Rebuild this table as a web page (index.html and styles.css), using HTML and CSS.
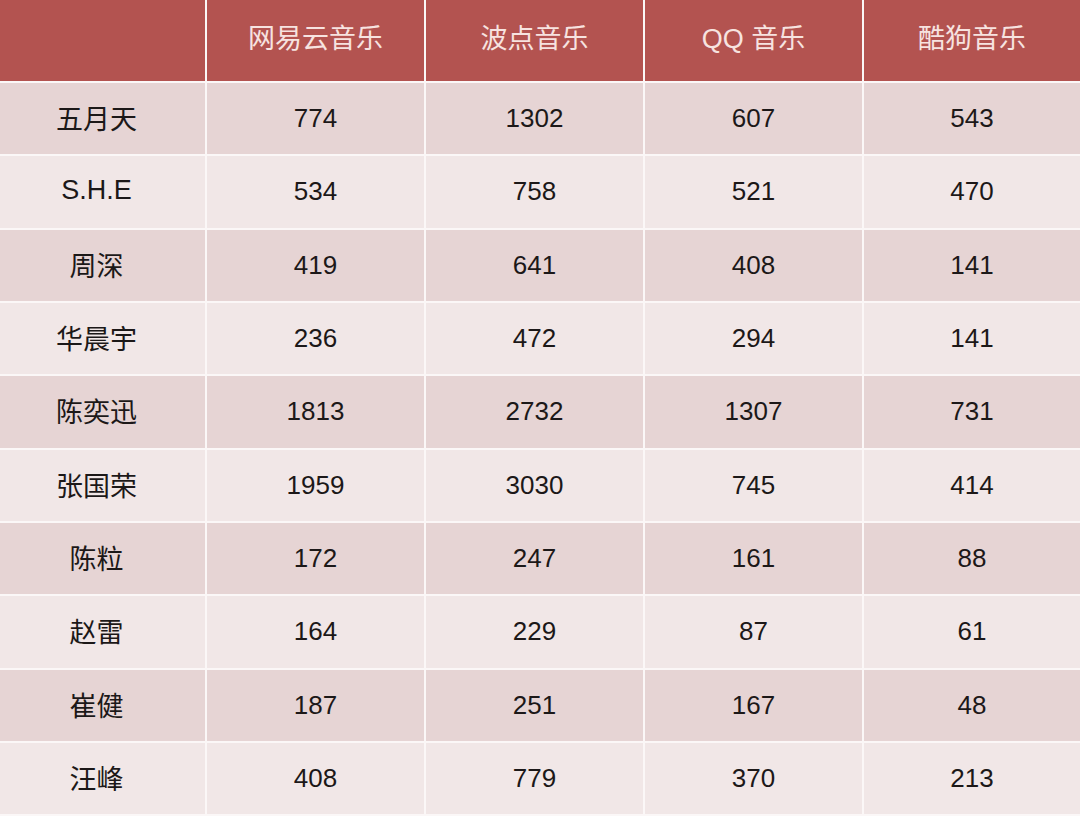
FILE: index.html
```html
<!DOCTYPE html>
<html lang="zh">
<head>
<meta charset="utf-8">
<title>音乐平台数据</title>
<link rel="stylesheet" href="styles.css">
</head>
<body>
<div class="table">
  <div class="cell head name"></div>
  <div class="cell head">网易云音乐</div>
  <div class="cell head">波点音乐</div>
  <div class="cell head">QQ 音乐</div>
  <div class="cell head">酷狗音乐</div>

  <div class="cell dark name">五月天</div><div class="cell dark">774</div><div class="cell dark">1302</div><div class="cell dark">607</div><div class="cell dark">543</div>
  <div class="cell light name">S.H.E</div><div class="cell light">534</div><div class="cell light">758</div><div class="cell light">521</div><div class="cell light">470</div>
  <div class="cell dark name">周深</div><div class="cell dark">419</div><div class="cell dark">641</div><div class="cell dark">408</div><div class="cell dark">141</div>
  <div class="cell light name">华晨宇</div><div class="cell light">236</div><div class="cell light">472</div><div class="cell light">294</div><div class="cell light">141</div>
  <div class="cell dark name">陈奕迅</div><div class="cell dark">1813</div><div class="cell dark">2732</div><div class="cell dark">1307</div><div class="cell dark">731</div>
  <div class="cell light name">张国荣</div><div class="cell light">1959</div><div class="cell light">3030</div><div class="cell light">745</div><div class="cell light">414</div>
  <div class="cell dark name">陈粒</div><div class="cell dark">172</div><div class="cell dark">247</div><div class="cell dark">161</div><div class="cell dark">88</div>
  <div class="cell light name">赵雷</div><div class="cell light">164</div><div class="cell light">229</div><div class="cell light">87</div><div class="cell light">61</div>
  <div class="cell dark name">崔健</div><div class="cell dark">187</div><div class="cell dark">251</div><div class="cell dark">167</div><div class="cell dark">48</div>
  <div class="cell light name">汪峰</div><div class="cell light">408</div><div class="cell light">779</div><div class="cell light">370</div><div class="cell light">213</div>
</div>
</body>
</html>
```
FILE: styles.css
```css
html, body {
  margin: 0;
  padding: 0;
  background: #fbf7f7;
}
body {
  width: 1080px;
  height: 816px;
  overflow: hidden;
  font-family: "Liberation Sans", "Noto Sans CJK SC", sans-serif;
}
.table {
  display: grid;
  grid-template-columns: 205px 217px 217px 217px 216px;
  grid-template-rows: 81px repeat(10, 71.33px);
  column-gap: 2px;
  row-gap: 2px;
  background: #fbf7f7;
  height: 816px;
  align-content: start;
}
.cell {
  display: flex;
  align-items: center;
  justify-content: center;
  font-size: 26px;
  color: #1c1818;
  box-sizing: border-box;
}
.name {
  font-size: 27px;
  padding-right: 12px;
  padding-bottom: 2px;
}
.head {
  background: #b35350;
  color: #f7e3e0;
  font-size: 27px;
  padding-bottom: 8px;
}
.dark {
  background: #e6d4d4;
}
.light {
  background: #f1e7e7;
}
```
